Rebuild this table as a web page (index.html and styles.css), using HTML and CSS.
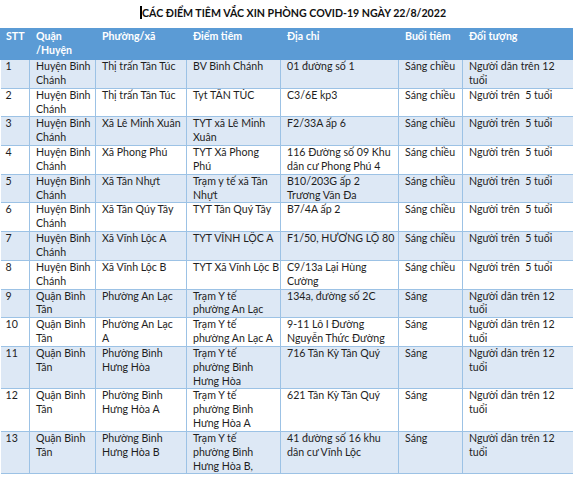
FILE: index.html
```html
<!DOCTYPE html>
<html lang="vi">
<head>
<meta charset="utf-8">
<title>Các điểm tiêm vắc xin</title>
<link rel="stylesheet" href="styles.css">
</head>
<body>
<div class="title"><span class="caret"></span>CÁC ĐIỂM TIÊM VẮC XIN PHÒNG COVID-19 NGÀY 22/8/2022</div>
<table class="sheet">
  <colgroup>
    <col class="c-stt"><col class="c-quan"><col class="c-phuong"><col class="c-diem"><col class="c-diachi"><col class="c-buoi"><col class="c-doi">
  </colgroup>
  <thead>
    <tr><th>STT</th><th>Quận<br>/Huyện</th><th>Phường/xã</th><th>Điểm tiêm</th><th>Địa chỉ</th><th>Buổi tiêm</th><th>Đối tượng</th></tr>
  </thead>
  <tbody>
    <tr class="alt"><td>1</td><td>Huyện Bình<br>Chánh</td><td>Thị trấn Tân Túc</td><td>BV Bình Chánh</td><td>01 đường số 1</td><td>Sáng chiều</td><td>Người dân trên 12<br>tuổi</td></tr>
    <tr><td>2</td><td>Huyện Bình<br>Chánh</td><td>Thị trấn Tân Túc</td><td>Tyt TÂN TÚC</td><td>C3/6E kp3</td><td>Sáng chiều</td><td>Người trên&nbsp; 5 tuổi</td></tr>
    <tr class="alt"><td>3</td><td>Huyện Bình<br>Chánh</td><td>Xã Lê Minh Xuân</td><td>TYT xã Lê Minh<br>Xuân</td><td>F2/33A ấp 6</td><td>Sáng chiều</td><td>Người trên&nbsp; 5 tuổi</td></tr>
    <tr><td>4</td><td>Huyện Bình<br>Chánh</td><td>Xã Phong Phú</td><td>TYT Xã Phong<br>Phú</td><td>116 Đường số 09 Khu<br>dân cư Phong Phú 4</td><td>Sáng chiều</td><td>Người trên&nbsp; 5 tuổi</td></tr>
    <tr class="alt"><td>5</td><td>Huyện Bình<br>Chánh</td><td>Xã Tân Nhựt</td><td>Trạm y tế xã Tân<br>Nhựt</td><td>B10/203G ấp 2<br>Trương Văn Đa</td><td>Sáng chiều</td><td>Người trên&nbsp; 5 tuổi</td></tr>
    <tr><td>6</td><td>Huyện Bình<br>Chánh</td><td>Xã Tân Qúy Tây</td><td>TYT Tân Quý Tây</td><td>B7/4A ấp 2</td><td>Sáng chiều</td><td>Người trên&nbsp; 5 tuổi</td></tr>
    <tr class="alt"><td>7</td><td>Huyện Bình<br>Chánh</td><td>Xã Vĩnh Lộc A</td><td>TYT VĨNH LỘC A</td><td>F1/50, HƯƠNG LỘ 80</td><td>Sáng chiều</td><td>Người trên&nbsp; 5 tuổi</td></tr>
    <tr><td>8</td><td>Huyện Bình<br>Chánh</td><td>Xã Vĩnh Lộc B</td><td>TYT Xã Vĩnh Lộc B</td><td>C9/13a Lại Hùng<br>Cường</td><td>Sáng chiều</td><td>Người trên&nbsp; 5 tuổi</td></tr>
    <tr class="alt"><td>9</td><td>Quận Bình<br>Tân</td><td>Phường An Lạc</td><td>Trạm Y tế<br>phường An Lạc</td><td>134a, đường số 2C</td><td>Sáng</td><td>Người dân trên 12<br>tuổi</td></tr>
    <tr><td>10</td><td>Quận Bình<br>Tân</td><td>Phường An Lạc<br>A</td><td>Trạm Y tế<br>phường An Lạc A</td><td>9-11 Lô I Đường<br>Nguyễn Thức Đường</td><td>Sáng</td><td>Người dân trên 12<br>tuổi</td></tr>
    <tr class="alt"><td>11</td><td>Quận Bình<br>Tân</td><td>Phường Bình<br>Hưng Hòa</td><td>Trạm Y tế<br>phường Bình<br>Hưng Hòa</td><td>716 Tân Kỳ Tân Quý</td><td>Sáng</td><td>Người dân trên 12<br>tuổi</td></tr>
    <tr><td>12</td><td>Quận Bình<br>Tân</td><td>Phường Bình<br>Hưng Hòa A</td><td>Trạm Y tế<br>phường Bình<br>Hưng Hòa A</td><td>621 Tân Kỳ Tân Quý</td><td>Sáng</td><td>Người dân trên 12<br>tuổi</td></tr>
    <tr class="alt"><td>13</td><td>Quận Bình<br>Tân</td><td>Phường Bình<br>Hưng Hòa B</td><td>Trạm Y tế<br>phường Bình<br>Hưng Hòa B,</td><td>41 đường số 16 khu<br>dân cư Vĩnh Lộc</td><td>Sáng</td><td>Người dân trên 12<br>tuổi</td></tr>
  </tbody>
</table>
</body>
</html>
```

FILE: styles.css
```css
html, body {
  margin: 0;
  padding: 0;
  background: #ffffff;
  overflow: hidden;
}
body {
  width: 573px;
  height: 477px;
  font-family: Lato, "Liberation Sans", Arial, sans-serif;
  color: #1e1e1e;
}
.title {
  height: 28px;
  box-sizing: border-box;
  padding: 7px 0 0 142px;
  font-size: 10.6px;
  font-weight: bold;
  line-height: 13px;
  color: #111;
  white-space: nowrap;
  position: relative;
}
.caret {
  position: absolute;
  left: 140px;
  top: 6px;
  width: 2px;
  height: 13px;
  background: #000;
}
.sheet {
  border-collapse: collapse;
  table-layout: fixed;
  width: 590px;
  font-size: 10.6px;
  line-height: 13.85px;
}
.c-stt { width: 29px; }
.c-quan { width: 66px; }
.c-phuong { width: 91px; }
.c-diem { width: 94px; }
.c-diachi { width: 118px; }
.c-buoi { width: 64px; }
.c-doi { width: 128px; }
.sheet th {
  background: #5b9bd5;
  color: #ffffff;
  font-weight: bold;
  text-align: left;
  vertical-align: top;
  padding: 1px 5px 1px 6px;
  height: 28px;
  border: 1px solid #5b9bd5;
  white-space: nowrap;
}
.sheet th:first-child { padding-left: 5px; }
.sheet td {
  vertical-align: top;
  padding: 0 4px 0 6px;
  border: 1px solid #9cc2e5;
  white-space: nowrap;
  overflow: hidden;
  background: #ffffff;
}
.sheet td:first-child {
  padding-left: 5px;
  border-left: none;
}
.sheet tr.alt td { background: #dde8f5; }
```
